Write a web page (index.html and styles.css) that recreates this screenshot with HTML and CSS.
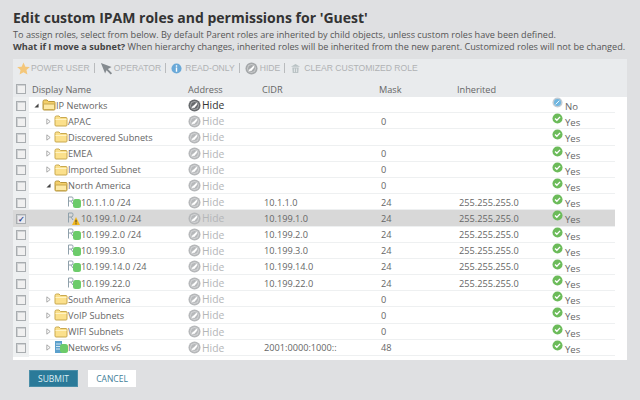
FILE: index.html
```html
<!DOCTYPE html>
<html lang="en">
<head>
<meta charset="utf-8">
<title>Edit custom IPAM roles</title>
<link rel="stylesheet" href="styles.css">
</head>
<body>
<svg class="defs" width="0" height="0" aria-hidden="true">
  <symbol id="folder" viewBox="0 0 14 12"><path d="M1 2.500Q1 1 2.500 1H5L6.500 2.500H12Q13 2.500 13 3.500V10Q13 11 12 11H2Q1 11 1 10Z" fill="#fbe08c" stroke="#c9a94e"/><path d="M1.500 4.500H12.500" stroke="#fff3c4"/></symbol>
  <symbol id="folderopen" viewBox="0 0 14 12"><path d="M1 2.500Q1 1 2.500 1H5L6.500 2.500H12Q13 2.500 13 3.500V10Q13 11 12 11H2Q1 11 1 10Z" fill="#f4cf6a" stroke="#b8963c"/><path d="M1.500 5H12.500V9.500Q12.500 10.500 11.500 10.500H2.500Q1.500 10.500 1.500 9.500Z" fill="#fde9a6" stroke="#c9a94e"/></symbol>
  <symbol id="hide" viewBox="0 0 14 14"><circle cx="7" cy="7" r="6.500" fill="currentColor"/><circle cx="7" cy="7" r="4.300" fill="none" stroke="#fff" stroke-opacity=".45"/><path d="M4.500 9.500L9.500 4.500M5 7.500L6.500 9L9.500 5.500" stroke="#fff" stroke-width="1.300" fill="none"/></symbol>
  <symbol id="yes" viewBox="0 0 12 12"><circle cx="6" cy="6" r="5.500" fill="#6cbb5a"/><path d="M3.300 6L5.300 8L8.800 4.200" stroke="#fff" stroke-width="1.500" fill="none"/></symbol>
  <symbol id="no" viewBox="0 0 12 12"><circle cx="6" cy="6" r="5.500" fill="#c4ccd3"/><circle cx="6" cy="6" r="3.800" fill="#6fb6e0"/><path d="M4 8L8 4" stroke="#fff"/></symbol>
  <symbol id="sub" viewBox="0 0 14 12"><path d="M1.500 10.500V1H5Q6 1 6 2.500T5 5H1.500M4 5L6 8" fill="none" stroke="#8fa0ab"/></symbol>
  <symbol id="dot" viewBox="0 0 8 9"><rect x="0" y="0" width="8" height="9" rx="2.500" fill="#6ccb6a"/></symbol>
  <symbol id="warn" viewBox="0 0 8 8"><path d="M4 0L8 8H0Z" fill="#f2b81e"/><path d="M4 2.800V5.500M4 6.300V7.300" stroke="#3a3020"/></symbol>
  <symbol id="arrow-open" viewBox="0 0 6 6"><path d="M5.500 .5V5.500H.5Z" fill="#444"/></symbol>
  <symbol id="arrow-closed" viewBox="0 0 6 8"><path d="M1 .8L5 4L1 7.200Z" fill="#fff" stroke="#9a9a9a"/></symbol>
</svg>
<main class="page">
  <h1 class="title">Edit custom IPAM roles and permissions for 'Guest'</h1>
  <p class="intro">To assign roles, select from below. By default Parent roles are inherited by child objects, unless custom roles have been defined.</p>
  <p class="intro"><b class="intro-q">What if I move a subnet?</b> When hierarchy changes, inherited roles will be inherited from the new parent. Customized roles will not be changed.</p>

  <section class="panel">
    <div class="toolbar">
      <span class="tool"><svg class="ticon" viewBox="0 0 14 14"><path d="M7 .5L9 5L13.800 5.500L10.200 8.700L11.200 13.500L7 11L2.800 13.500L3.800 8.700L.2 5.500L5 5Z" fill="#f4c77a"/></svg>POWER USER</span><span class="sep"></span>
      <span class="tool"><svg class="ticon ticon-c" viewBox="0 0 14 14"><path d="M1 1L12.500 5.500L8.500 7.500L13 12L11.500 13.500L7 9L5.500 12.500Z" fill="#858b90"/></svg>OPERATOR</span><span class="sep"></span>
      <span class="tool"><svg class="ticon ticon-i" viewBox="0 0 12 12"><circle cx="6" cy="6" r="5.500" fill="#6aa9d8"/><path d="M6 5V9.500M6 2.500V4" stroke="#fff" stroke-width="1.500"/></svg>READ-ONLY</span><span class="sep"></span>
      <span class="tool tool-hide"><svg class="ticon ticon-h"><use href="#hide"/></svg>HIDE</span><span class="sep"></span>
      <span class="tool"><svg class="ticon ticon-t" viewBox="0 0 12 12"><path d="M1 4L6 1L11 4ZM2.500 5H9.500L9 11H3Z" fill="#b9c2c4"/><path d="M4.800 6V10M7.200 6V10" stroke="#e9ebed"/></svg>CLEAR CUSTOMIZED ROLE</span>
    </div>

    <div class="head row-grid">
      <span class="cb-cell"><i class="cb"></i></span>
      <span class="h-name">Display Name</span><span>Address</span><span>CIDR</span><span>Mask</span><span>Inherited</span><span></span>
    </div>

    <div class="rows">
      <div class="row row-grid"><span class="cb-cell"><i class="cb"></i></span><span class="name l1"><svg class="tw tw-o"><use href="#arrow-open"/></svg><svg class="fold"><use href="#folderopen"/></svg>IP Networks</span><span class="addr on"><svg class="hi"><use href="#hide"/></svg>Hide</span><span class="c"></span><span class="c"></span><span class="c"></span><span class="st"><svg class="sti"><use href="#no"/></svg>No</span></div>
      <div class="row row-grid"><span class="cb-cell"><i class="cb"></i></span><span class="name l2"><svg class="tw"><use href="#arrow-closed"/></svg><svg class="fold"><use href="#folder"/></svg>APAC</span><span class="addr"><svg class="hi"><use href="#hide"/></svg>Hide</span><span class="c"></span><span class="c">0</span><span class="c"></span><span class="st"><svg class="sti"><use href="#yes"/></svg>Yes</span></div>
      <div class="row row-grid"><span class="cb-cell"><i class="cb"></i></span><span class="name l2"><svg class="tw"><use href="#arrow-closed"/></svg><svg class="fold"><use href="#folder"/></svg>Discovered Subnets</span><span class="addr"><svg class="hi"><use href="#hide"/></svg>Hide</span><span class="c"></span><span class="c"></span><span class="c"></span><span class="st"><svg class="sti"><use href="#yes"/></svg>Yes</span></div>
      <div class="row row-grid"><span class="cb-cell"><i class="cb"></i></span><span class="name l2"><svg class="tw"><use href="#arrow-closed"/></svg><svg class="fold"><use href="#folder"/></svg>EMEA</span><span class="addr"><svg class="hi"><use href="#hide"/></svg>Hide</span><span class="c"></span><span class="c">0</span><span class="c"></span><span class="st"><svg class="sti"><use href="#yes"/></svg>Yes</span></div>
      <div class="row row-grid"><span class="cb-cell"><i class="cb"></i></span><span class="name l2"><svg class="tw"><use href="#arrow-closed"/></svg><svg class="fold"><use href="#folder"/></svg>Imported Subnet</span><span class="addr"><svg class="hi"><use href="#hide"/></svg>Hide</span><span class="c"></span><span class="c">0</span><span class="c"></span><span class="st"><svg class="sti"><use href="#yes"/></svg>Yes</span></div>
      <div class="row row-grid"><span class="cb-cell"><i class="cb"></i></span><span class="name l2"><svg class="tw tw-o"><use href="#arrow-open"/></svg><svg class="fold"><use href="#folderopen"/></svg>North America</span><span class="addr"><svg class="hi"><use href="#hide"/></svg>Hide</span><span class="c"></span><span class="c">0</span><span class="c"></span><span class="st"><svg class="sti"><use href="#yes"/></svg>Yes</span></div>
      <div class="row row-grid"><span class="cb-cell"><i class="cb"></i></span><span class="name l3"><span class="sn"><svg class="sn-b"><use href="#sub"/></svg><svg class="sn-d"><use href="#dot"/></svg></span>10.1.1.0 /24</span><span class="addr"><svg class="hi"><use href="#hide"/></svg>Hide</span><span class="c">10.1.1.0</span><span class="c">24</span><span class="c">255.255.255.0</span><span class="st"><svg class="sti"><use href="#yes"/></svg>Yes</span></div>
      <div class="row row-grid row-sel"><span class="cb-cell"><i class="cb cb-on">✓</i></span><span class="name l3"><span class="sn"><svg class="sn-b"><use href="#sub"/></svg><svg class="sn-w"><use href="#warn"/></svg></span>10.199.1.0 /24</span><span class="addr"><svg class="hi"><use href="#hide"/></svg>Hide</span><span class="c">10.199.1.0</span><span class="c">24</span><span class="c">255.255.255.0</span><span class="st"><svg class="sti"><use href="#yes"/></svg>Yes</span></div>
      <div class="row row-grid"><span class="cb-cell"><i class="cb"></i></span><span class="name l3"><span class="sn"><svg class="sn-b"><use href="#sub"/></svg><svg class="sn-d"><use href="#dot"/></svg></span>10.199.2.0 /24</span><span class="addr"><svg class="hi"><use href="#hide"/></svg>Hide</span><span class="c">10.199.2.0</span><span class="c">24</span><span class="c">255.255.255.0</span><span class="st"><svg class="sti"><use href="#yes"/></svg>Yes</span></div>
      <div class="row row-grid"><span class="cb-cell"><i class="cb"></i></span><span class="name l3"><span class="sn"><svg class="sn-b"><use href="#sub"/></svg><svg class="sn-d"><use href="#dot"/></svg></span>10.199.3.0</span><span class="addr"><svg class="hi"><use href="#hide"/></svg>Hide</span><span class="c">10.199.3.0</span><span class="c">24</span><span class="c">255.255.255.0</span><span class="st"><svg class="sti"><use href="#yes"/></svg>Yes</span></div>
      <div class="row row-grid"><span class="cb-cell"><i class="cb"></i></span><span class="name l3"><span class="sn"><svg class="sn-b"><use href="#sub"/></svg><svg class="sn-d"><use href="#dot"/></svg></span>10.199.14.0 /24</span><span class="addr"><svg class="hi"><use href="#hide"/></svg>Hide</span><span class="c">10.199.14.0</span><span class="c">24</span><span class="c">255.255.255.0</span><span class="st"><svg class="sti"><use href="#yes"/></svg>Yes</span></div>
      <div class="row row-grid"><span class="cb-cell"><i class="cb"></i></span><span class="name l3"><span class="sn"><svg class="sn-b"><use href="#sub"/></svg><svg class="sn-d"><use href="#dot"/></svg></span>10.199.22.0</span><span class="addr"><svg class="hi"><use href="#hide"/></svg>Hide</span><span class="c">10.199.22.0</span><span class="c">24</span><span class="c">255.255.255.0</span><span class="st"><svg class="sti"><use href="#yes"/></svg>Yes</span></div>
      <div class="row row-grid"><span class="cb-cell"><i class="cb"></i></span><span class="name l2"><svg class="tw"><use href="#arrow-closed"/></svg><svg class="fold"><use href="#folder"/></svg>South America</span><span class="addr"><svg class="hi"><use href="#hide"/></svg>Hide</span><span class="c"></span><span class="c">0</span><span class="c"></span><span class="st"><svg class="sti"><use href="#yes"/></svg>Yes</span></div>
      <div class="row row-grid"><span class="cb-cell"><i class="cb"></i></span><span class="name l2"><svg class="tw"><use href="#arrow-closed"/></svg><svg class="fold"><use href="#folder"/></svg>VoIP Subnets</span><span class="addr"><svg class="hi"><use href="#hide"/></svg>Hide</span><span class="c"></span><span class="c">0</span><span class="c"></span><span class="st"><svg class="sti"><use href="#yes"/></svg>Yes</span></div>
      <div class="row row-grid"><span class="cb-cell"><i class="cb"></i></span><span class="name l2"><svg class="tw"><use href="#arrow-closed"/></svg><svg class="fold"><use href="#folder"/></svg>WIFI Subnets</span><span class="addr"><svg class="hi"><use href="#hide"/></svg>Hide</span><span class="c"></span><span class="c">0</span><span class="c"></span><span class="st"><svg class="sti"><use href="#yes"/></svg>Yes</span></div>
      <div class="row row-grid"><span class="cb-cell"><i class="cb"></i></span><span class="name l2"><svg class="tw"><use href="#arrow-closed"/></svg><span class="sn"><svg class="v6" viewBox="0 0 12 13"><rect x="1" y="0" width="7" height="12" fill="#5ba0cc"/><path d="M2 3H7M2 5.500H7M2 8H7" stroke="#d5e8f3"/></svg><svg class="sn-d"><use href="#dot"/></svg></span>Networks v6</span><span class="addr"><svg class="hi"><use href="#hide"/></svg>Hide</span><span class="c">2001:0000:1000::</span><span class="c">48</span><span class="c"></span><span class="st"><svg class="sti"><use href="#yes"/></svg>Yes</span></div>
    </div>
  </section>

  <div class="actions">
    <button class="btn btn-submit" type="button">SUBMIT</button>
    <button class="btn btn-cancel" type="button">CANCEL</button>
  </div>
</main>
</body>
</html>
```

FILE: styles.css
```css
* { box-sizing: border-box; }
html, body { margin: 0; padding: 0; }
body {
  width: 640px;
  height: 400px;
  overflow: hidden;
  background: #dfe0e2;
  font-family: "Open Sans", "Liberation Sans", sans-serif;
  font-size: 9.200px;
  color: #555;
}
.defs { position: absolute; }
.page { padding: 7px 13px 0; }
.title {
  margin: 0;
  font-size: 14px;
  line-height: 22px;
  font-weight: 700;
  color: #333;
}
.intro {
  margin: 0;
  height: 12px;
  line-height: 12px;
  font-size: 9.150px;
  color: #555;
  white-space: nowrap;
}
.intro-q { color: #444; }
.panel {
  margin-top: 6px;
  width: 614px;
  height: 301px;
  background: #fff;
  display: flex;
  flex-direction: column;
}
.toolbar {
  height: 18px;
  background: #e9ebed;
  display: flex;
  align-items: center;
  padding: 0 4px;
  font-family: "Liberation Sans", sans-serif;
  font-size: 8.600px;
  color: #b0b2b4;
  white-space: nowrap;
}
.tool { display: inline-flex; align-items: center; }
.ticon { width: 13px; height: 13px; margin-right: 1px; }
.ticon-i { width: 11px; height: 11px; margin-right: 3px; }
.ticon-h { margin-right: 2px; color: #a5a8aa; }
.ticon-t { width: 11px; height: 11px; margin-right: 3px; }
.sep { width: 1px; height: 10px; background: #b9bbbd; margin: 0 5px 0 4px; }
.row-grid {
  display: grid;
  grid-template-columns: 16px 159px 74px 117px 78px 93px 65px;
  align-items: center;
}
.head {
  height: 20px;
  padding-top: 4px;
  background: #e9ebed;
  font-size: 9.200px;
  color: #666;
}
.h-name { padding-left: 3px; }
.cb-cell {
  display: flex;
  justify-content: center;
  align-items: center;
  align-self: stretch;
}
.cb {
  display: block;
  width: 10px;
  height: 10px;
  background: #f0f0f0;
  border: 1px solid #a9adb0;
  box-shadow: inset 1px 1px 0 #d0d2d4;
  font-style: normal;
  font-size: 8px;
  line-height: 8px;
  text-align: center;
  color: #2b3f8a;
}
.cb-on { background: #e8e8ee; font-weight: 700; }
.rows { display: flex; flex-direction: column; width: 602px; }
.row {
  height: 16.200px;
  border-bottom: 1px solid #eef0f1;
  background: #fff;
  color: #666;
  font-size: 9.200px;
}
.row > .cb-cell { background: #eef0f1; margin-bottom: -1px; }
.row-sel { background: #d8d8d8; }
.row-sel > .cb-cell { background: #d8d8d8; }
.name { display: flex; align-items: center; white-space: nowrap; color: #666; }
.l1 { padding-left: 5px; }
.l2 { padding-left: 17px; }
.l3 { padding-left: 38px; }
.tw { width: 5px; height: 7px; margin-right: 3px; flex: none; }
.tw-o { height: 5px; }
.fold { width: 14px; height: 12px; flex: none; }
.sn { position: relative; width: 14px; height: 13px; display: inline-block; flex: none; }
.sn-b { position: absolute; left: 0; top: 0; width: 14px; height: 12px; }
.sn-d { position: absolute; left: 6px; top: 3px; width: 8px; height: 9px; }
.sn-w { position: absolute; left: 5px; top: 5px; width: 8px; height: 8px; }
.v6 { position: absolute; left: 0; top: 0; width: 12px; height: 13px; }
.addr {
  display: flex;
  align-items: center;
  color: #b4b6b8;
  font-size: 10.300px;
}
.addr.on { color: #333; }
.hi { width: 13px; height: 13px; margin-right: 1px; color: #b6b8ba; flex: none; }
.on .hi { color: #66696c; }
.c { padding-left: 2px; white-space: nowrap; }
.st { display: flex; align-items: center; color: #666; position: relative; padding-left: 15px; padding-top: 3px; font-size: 9.600px; }
.sti { width: 11px; height: 11px; position: absolute; left: 2px; top: 0; }
.actions {
  display: flex;
  gap: 10px;
  margin: 10px 0 0 16px;
}
.btn {
  height: 17px;
  padding: 0;
  font-family: "Open Sans", sans-serif;
  font-size: 8.500px;
  border: 0;
}
.btn-submit { width: 49px; background: #2b7a99; color: #dfeef4; border: 1px solid #4a8ea8; }
.btn-cancel { width: 48px; background: #fff; color: #3f8098; }
```
